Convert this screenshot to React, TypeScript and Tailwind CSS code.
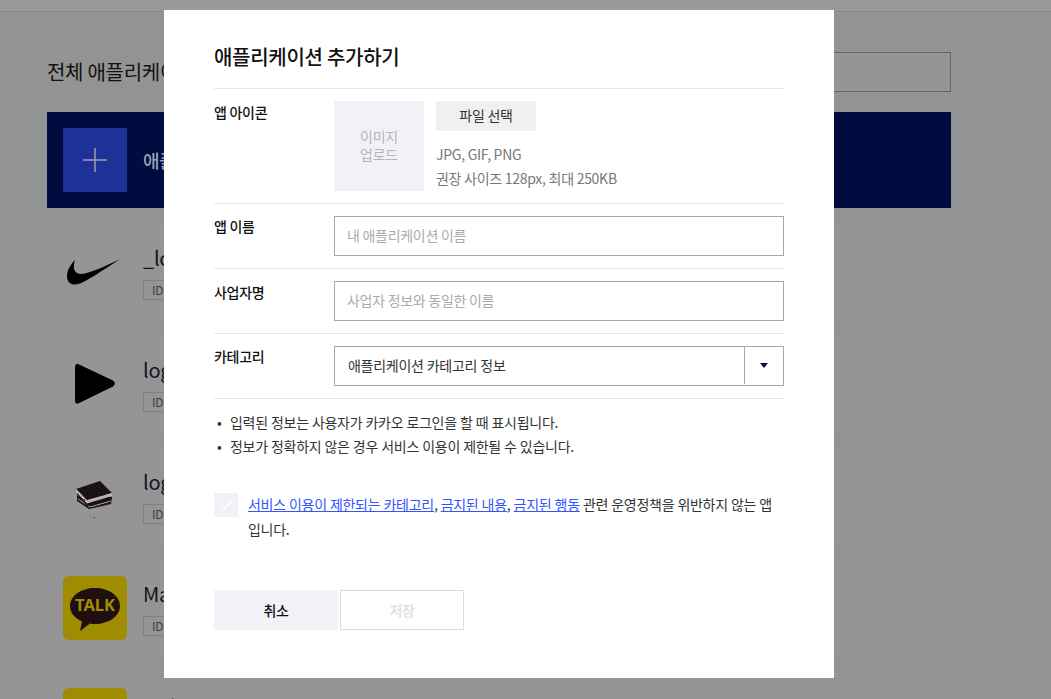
import React from 'react';

const FONT = "font-['Noto_Sans_CJK_KR','Noto_Sans',sans-serif]";

const Swoosh = () => (
  <svg width="64" height="64" viewBox="0 0 64 64">
    <path d="M58 19 C45 26 30 38 17 43.500 C10 46 4 44 4 36 C4 30 8 24 12 20 C10 26 10 33 17 34 C24 34.500 40 27 58 19 Z" fill="#000" />
  </svg>
);

const PlayIcon = () => (
  <svg width="64" height="64" viewBox="0 0 64 64">
    <path d="M15 12.500 L50 29 Q53 31.500 50 34 L15 51 Q12.500 52 12.500 49 L12.500 15 Q12.500 11.500 15 12.500 Z" fill="#000" stroke="#000" strokeWidth="1" />
  </svg>
);

const Books = () => (
  <svg width="64" height="64" viewBox="0 0 64 64">
    <path d="M14 32 L14 37 L26 45 L48 40 L49 33 L30 28 Z" fill="#1a1213" />
    <path d="M15 35 L27 43 L48 37" stroke="#a9a9a9" strokeWidth="1" fill="none" />
    <path d="M13 25 L37 17 L49 29 L24 36 Z" fill="#1a1213" />
    <path d="M13 25 L24 36 L49 29 L49 32 L24 39.500 L13 28 Z" fill="#b5b5b5" />
    <path d="M14 29 L24 40 L49 33 L49 35 L24 42 L14 31 Z" fill="#1a1213" />
    <circle cx="21" cy="36" r="1.300" fill="#8a2a2a" />
    <path d="M13 52 H50" stroke="#8a8a8a" strokeWidth="0.500" />
    <path d="M30 53.500 h2.500 l-1.250 1.500 z" fill="#444" />
  </svg>
);

const KakaoIcon = () => (
  <div className="flex h-16 w-16 items-center justify-center rounded-md bg-[#a08c00]">
    <svg width="64" height="64" viewBox="0 0 64 64">
      <path d="M32 12 C18 12 7 20 7 30 C7 37 12 42.500 19 45.500 L17 55 L27 47.500 C29 48 30.500 48 32 48 C46 48 57 40 57 30 C57 20 46 12 32 12 Z" fill="#1f0f10" />
      <text x="32" y="35" textAnchor="middle" fontSize="16.500" fontWeight="700" letterSpacing="0" fill="#a08c00" fontFamily="'Noto Sans','Liberation Sans',sans-serif">TALK</text>
    </svg>
  </div>
);

const AppCard = ({ icon, name }: { icon: React.ReactNode; name: string }) => (
  <div className="flex h-24 shrink-0 items-center gap-4 bg-[#959595] px-4">
    <div className="flex h-16 w-16 shrink-0 items-center justify-center">{icon}</div>
    <div>
      <p className="text-[20px] leading-[28px] text-[#0f1420]">{name}</p>
      <span className="mt-[8px] flex h-[20px] w-[80px] items-center border border-[#808080] px-2 text-[12px] text-[#3c3c3c]">ID</span>
    </div>
  </div>
);

const Row = ({ label, className, labelClass = '', children }: { label: string; className: string; labelClass?: string; children: React.ReactNode }) => (
  <div className={`flex border-b border-[#e6e6e6] ${className}`}>
    <div className={`w-[120px] shrink-0 text-[14px] font-medium leading-[20px] text-[#111] ${labelClass}`}>{label}</div>
    <div className="min-w-0 flex-1">{children}</div>
  </div>
);

export default function App() {
  return (
    <div className={`relative h-[699px] w-[1051px] overflow-hidden bg-[#929493] tracking-[-0.28px] ${FONT}`}>
      {/* dimmed page behind the dialog */}
      <div className="h-3 border-b border-[#858585] bg-[#999999]" />
      <main className="flex flex-col gap-4 px-[47px] pr-[100px] pt-10">
        <div className="mb-[4px] flex h-10 items-center justify-between">
          <h2 className="whitespace-nowrap text-[20px] text-[#111]">전체 애플리케이션</h2>
          <div className="h-10 w-[400px] border border-[#666] bg-[#959595]" />
        </div>
        <div className="flex h-24 shrink-0 items-center gap-4 bg-[#000c40] px-4">
          <div className="flex h-16 w-16 items-center justify-center bg-[#1c3299]">
            <svg width="26" height="26" viewBox="0 0 26 26">
              <path d="M13 1 V25 M1 13 H25" stroke="#a3a3a3" strokeWidth="1.500" />
            </svg>
          </div>
          <span className="text-[18px] font-medium text-[#99a3b8]">애플리케이션 추가하기</span>
        </div>
        <AppCard icon={<Swoosh />} name="_login" />
        <AppCard icon={<PlayIcon />} name="login" />
        <AppCard icon={<Books />} name="login" />
        <AppCard icon={<KakaoIcon />} name="Main" />
        <AppCard icon={<KakaoIcon />} name="Main" />
      </main>

      {/* dialog */}
      <div className="absolute left-[164px] top-[10px] h-[668px] w-[670px] bg-white px-[50px] pt-[29px]">
        <h1 className="h-[50px] border-b border-[#e6e6e6] text-[20px] font-medium leading-[36px] text-[#111]">애플리케이션 추가하기</h1>

        <Row label="앱 아이콘" className="h-[115px] pt-3" labelClass="pt-[1px]">
          <div className="flex gap-3">
            <div className="flex h-[90px] w-[90px] items-center justify-center bg-[#f1f2f7] pb-[2px] text-center text-[14px] leading-[18px] text-[#b5b5b5]">
              이미지<br />업로드
            </div>
            <div>
              <button className="block h-[30px] w-[100px] bg-[#f0f0f0] pb-[2px] text-[14px] text-[#333]">파일 선택</button>
              <p className="mt-[11px] text-[14px] leading-[24px] text-[#777]">JPG, GIF, PNG<br />권장 사이즈 128px, 최대 250KB</p>
            </div>
          </div>
        </Row>

        <Row label="앱 이름" className="h-[65px] pt-3">
          <div className="flex h-10 items-center border border-[#a8a8a8] px-3 pb-[2px] text-[14px] text-[#aaa]">내 애플리케이션 이름</div>
        </Row>

        <Row label="사업자명" className="h-[65px] pt-3" labelClass="pt-[1px]">
          <div className="flex h-10 items-center border border-[#a8a8a8] px-3 pb-[2px] text-[14px] text-[#aaa]">사업자 정보와 동일한 이름</div>
        </Row>

        <Row label="카테고리" className="h-[65px] pt-3">
          <div className="flex h-10 items-center border border-[#a8a8a8] pb-[1px] text-[14px] text-[#333]">
            <span className="flex-1 px-[13px] pb-[1px] [word-spacing:0.3px]">애플리케이션 카테고리 정보</span>
            <span className="flex h-full w-[39px] items-center justify-center border-l border-[#a8a8a8]">
              <span className="h-0 w-0 border-x-[4px] border-t-[5px] border-x-transparent border-t-[#000c66]" />
            </span>
          </div>
        </Row>

        <ul className="mt-[11px] text-[14px] leading-[24px] text-[#333] [word-spacing:0.3px]">
          <li className="flex"><span className="w-4 pl-[3px]">•</span>입력된 정보는 사용자가 카카오 로그인을 할 때 표시됩니다.</li>
          <li className="flex"><span className="w-4 pl-[3px]">•</span>정보가 정확하지 않은 경우 서비스 이용이 제한될 수 있습니다.</li>
        </ul>

        <div className="mt-[34px] flex gap-[10px]">
          <span className="mt-[1px] flex h-6 w-6 shrink-0 items-center justify-center bg-[#f1f2f7]">
            <svg width="12" height="10" viewBox="0 0 12 10">
              <path d="M1 5 L4.500 8.500 L11 1" stroke="#fff" strokeWidth="1.500" fill="none" />
            </svg>
          </span>
          <p className="w-[526px] text-[14px] leading-[25px] text-[#333] [word-spacing:0.3px]">
            <a className="text-[#3355ff] underline">서비스 이용이 제한되는 카테고리</a>, <a className="text-[#3355ff] underline">금지된 내용</a>, <a className="text-[#3355ff] underline">금지된 행동</a> 관련 운영정책을 위반하지 않는 앱입니다.
          </p>
        </div>

        <div className="mt-[48px] flex gap-[2px]">
          <button className="h-10 w-[124px] bg-[#f1f2f7] text-[14px] font-medium text-[#111]">취소</button>
          <button className="h-10 w-[124px] border border-[#dcdcdc] bg-white text-[14px] font-medium text-[#dcdcdc]">저장</button>
        </div>
      </div>
    </div>
  );
}
